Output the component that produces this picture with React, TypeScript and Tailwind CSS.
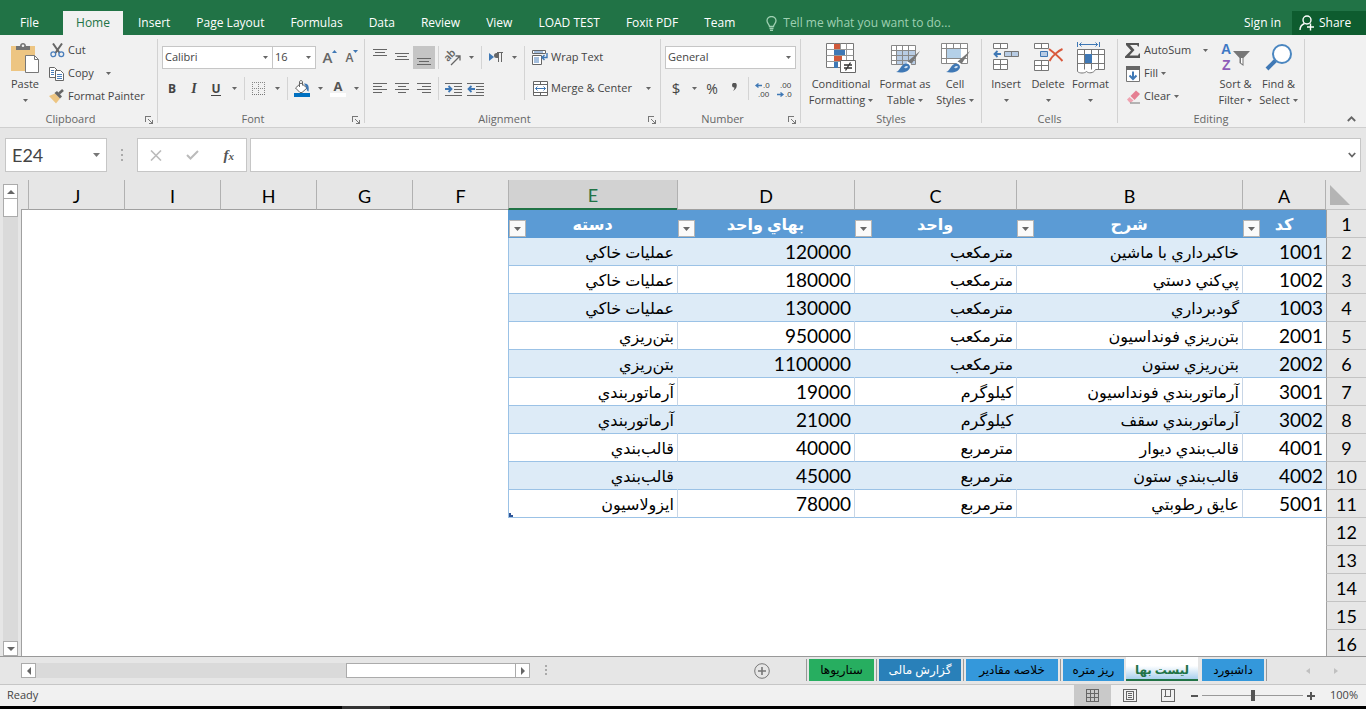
import { ReactNode, useState } from 'react'
import clsx from 'clsx'

type PriceRow = {
  code: number
  title: string
  unit: string
  price: number
  category: string
}

const ROWS: PriceRow[] = [
  { code: 1001, title: 'خاكبرداري با ماشين', unit: 'مترمكعب', price: 120000, category: 'عمليات خاكي' },
  { code: 1002, title: 'پي‌كني دستي', unit: 'مترمكعب', price: 180000, category: 'عمليات خاكي' },
  { code: 1003, title: 'گودبرداري', unit: 'مترمكعب', price: 130000, category: 'عمليات خاكي' },
  { code: 2001, title: 'بتن‌ريزي فونداسيون', unit: 'مترمكعب', price: 950000, category: 'بتن‌ريزي' },
  { code: 2002, title: 'بتن‌ريزي ستون', unit: 'مترمكعب', price: 1100000, category: 'بتن‌ريزي' },
  { code: 3001, title: 'آرماتوربندي فونداسيون', unit: 'كيلوگرم', price: 19000, category: 'آرماتوربندي' },
  { code: 3002, title: 'آرماتوربندي سقف', unit: 'كيلوگرم', price: 21000, category: 'آرماتوربندي' },
  { code: 4001, title: 'قالب‌بندي ديوار', unit: 'مترمربع', price: 40000, category: 'قالب‌بندي' },
  { code: 4002, title: 'قالب‌بندي ستون', unit: 'مترمربع', price: 45000, category: 'قالب‌بندي' },
  { code: 5001, title: 'عايق رطوبتي', unit: 'مترمربع', price: 78000, category: 'ايزولاسيون' },
]

const FIELDS = ['كد', 'شرح', 'واحد', 'بهاي واحد', 'دسته']
const COLUMNS = ['A', 'B', 'C', 'D', 'E', 'F', 'G', 'H', 'I', 'J']
const COLUMN_WIDTHS = ['w-[84px]', 'w-[226px]', 'w-[162px]', 'w-[177px]', 'w-[169px]', 'w-24', 'w-24', 'w-24', 'w-24', 'w-24']
const EMPTY_ROWS = [12, 13, 14, 15, 16]

const MENU = ['Insert', 'Page Layout', 'Formulas', 'Data', 'Review', 'View', 'LOAD TEST', 'Foxit PDF', 'Team']

const TAB_EDGE = 'shadow-[2px_0_0_#e6e6e6,3px_0_0_#999]'

const SHEETS = [
  { name: 'سناريوها', style: 'mr-[5px] bg-[#27ae60] text-black w-[65px]', edge: true },
  { name: 'گزارش مالی', style: 'mr-[5px] bg-[#2980b9] text-white w-[82px]', edge: true },
  { name: 'خلاصه مقادیر', style: 'mr-[5px] bg-[#3498db] text-black w-[92px]', edge: true },
  { name: 'ریز متره', style: 'mr-[2px] bg-[#3498db] text-black w-[61px]' },
  { name: 'لیست بها', style: 'mr-1 w-[72px]', active: true },
  { name: 'داشبورد', style: 'mr-1 bg-[#3498db] text-black w-[62px]', edge: true },
]

/* ---------- small parts ---------- */

function Caret({ className }: { className?: string }) {
  return (
    <svg viewBox="0 0 5 3" width="5" height="3" className={clsx('inline-block shrink-0 text-[#666]', className)}>
      <path d="M0 0h5L2.5 3z" fill="currentColor" />
    </svg>
  )
}

function CaretButton({ label }: { label: string }) {
  return (
    <button type="button" aria-label={label} className="flex h-[23px] w-[14px] items-center justify-center">
      <Caret />
    </button>
  )
}

function IconButton({ label, active, children }: { label: string; active?: boolean; children: ReactNode }) {
  return (
    <button
      type="button"
      aria-label={label}
      className={clsx('flex h-[23px] w-[22px] items-center justify-center', active && 'bg-[#c5c5c5]')}
    >
      {children}
    </button>
  )
}

function Divider() {
  return <div className="mx-[3px] h-[23px] w-px bg-[#d4d4d4]" />
}

function Group({ title, launcher, className, children }: { title: string; launcher?: boolean; className: string; children: ReactNode }) {
  return (
    <section className={clsx('flex shrink-0 pt-1', className)}>
      <div className="flex min-w-0 flex-1 flex-col">
        <div className="flex h-[73px] shrink-0">{children}</div>
        <div className={clsx('relative text-center text-[11px] leading-[14px] text-[#666]', launcher && 'pr-4')}>
          {title}
          {launcher && (
            <button type="button" aria-label={`${title} settings`} className="absolute right-1 top-1">
              <svg width="8" height="8" viewBox="0 0 8 8" fill="none" stroke="#777" shapeRendering="crispEdges">
                <path d="M.5 6V.5H6M3 3l4 4M7.5 4v3.5H4" />
              </svg>
            </button>
          )}
        </div>
      </div>
      <div className="mb-1 w-px bg-[#d2d2d2]" />
    </section>
  )
}

function BigButton({ icon, lines, className }: { icon: ReactNode; lines: [string, string?]; className: string }) {
  return (
    <button type="button" className={clsx('flex shrink-0 flex-col items-center pt-1 whitespace-nowrap', className)}>
      {icon}
      <span className="mt-[3px] leading-4">{lines[0]}</span>
      <span className="flex h-4 items-center gap-[3px]">
        {lines[1]}
        <Caret />
      </span>
    </button>
  )
}

function SmallButton({ icon, label, caret }: { icon: ReactNode; label: string; caret?: string }) {
  return (
    <button type="button" className="flex h-[23px] items-center whitespace-nowrap">
      <span className="mr-[3px] flex w-4 justify-center">{icon}</span>
      {label}
      {caret && <Caret className={caret} />}
    </button>
  )
}

function Dropdown({ label, value, className }: { label: string; value: string; className: string }) {
  return (
    <div className={clsx('relative h-[23px] border border-[#c6c6c6] bg-white', className)}>
      <select aria-label={label} defaultValue={value} className="h-full w-full appearance-none pl-[2px] text-[#444] outline-none">
        <option>{value}</option>
      </select>
      <Caret className="pointer-events-none absolute right-1 top-[9px]" />
    </div>
  )
}

/* ---------- icons ---------- */

function Lines({ rows }: { rows: [number, number, number][] }) {
  return (
    <svg width="15" height="17" viewBox="0 0 15 17" stroke="#666" shapeRendering="crispEdges">
      {rows.map(([x1, x2, y]) => (
        <path key={y} d={`M${x1} ${y + 0.5}H${x2}`} />
      ))}
    </svg>
  )
}

function PasteIcon() {
  return (
    <svg width="30" height="30" viewBox="0 0 30 30">
      <path d="M1 3h24v25H1z" fill="#edc582" />
      <path d="M6 7V3h4c0-4 6-4 6 0h4v4z" fill="#737373" />
      <circle cx="13" cy="2.8" r="1.3" fill="#f1f1f1" />
      <path d="M15.500 12.500h9l4 4v13h-13z" fill="#fff" stroke="#777" />
      <path d="M24.500 12.500v4h4" fill="none" stroke="#777" />
    </svg>
  )
}

function CutIcon() {
  return (
    <svg width="15" height="15" viewBox="0 0 15 15" fill="none">
      <path d="M3 .5 9.600 10M12 .5 5.400 10" stroke="#666" strokeWidth="2" />
      <circle cx="3.3" cy="11.3" r="2.4" stroke="#4a7ebb" strokeWidth="1.3" />
      <circle cx="11.3" cy="11.3" r="2.4" stroke="#4a7ebb" strokeWidth="1.3" />
    </svg>
  )
}

function CopyIcon() {
  return (
    <svg width="16" height="14" viewBox="0 0 16 14" fill="#fff" stroke="#666">
      <path d="M.5.5h5l3 3v7h-8z" />
      <path d="M2 3.500h3M2 5.500h3M2 7.500h3" stroke="#4a7ebb" />
      <path d="M6.500 3.500h5l3 3v7h-8z" />
      <path d="M8 7.500h5M8 9.500h5M8 11.500h5" stroke="#4a7ebb" />
    </svg>
  )
}

function PainterIcon() {
  return (
    <svg width="16" height="15" viewBox="0 0 16 15">
      <path d="M0 7 6 4.500l5 5L7 14.500z" fill="#edc582" />
      <path d="M5.500 4 8 2l5 5.500-2 2z" fill="#666" />
      <path d="m10 4.500 4-3.500" stroke="#666" strokeWidth="2.6" />
    </svg>
  )
}

function BordersIcon() {
  return (
    <svg width="14" height="14" viewBox="0 0 14 14" fill="none" stroke="#888" strokeDasharray="1 1" shapeRendering="crispEdges">
      <path d="M0 .5h13M0 6.500h13M.5 0v13M6.500 0v13M12.500 0v13" />
      <path d="M0 12.500h13" stroke="#777" />
    </svg>
  )
}

function FillColorIcon() {
  return (
    <svg width="18" height="17" viewBox="0 0 18 17">
      <path d="m8 3 6 5-5 4.500H7L2.500 8z" fill="#fff" stroke="#666" />
      <path d="M6.500 7V2c0-2 3-2 3 0v3.500" fill="none" stroke="#666" />
      <path d="M11 3.500c4-.5 5.500 2.500 4.500 8-1.500-.5-2-2-2-4z" fill="#3f78b5" />
      <path d="M1 13h16v4H1z" fill="#0070c0" />
    </svg>
  )
}

function FontColorIcon() {
  return (
    <span className="flex h-[17px] w-4 flex-col items-center">
      <span className="text-[13px] font-bold leading-[13px] text-[#555]">A</span>
      <span className="h-1 w-4 bg-white" />
    </span>
  )
}

function OrientationIcon() {
  return (
    <svg width="18" height="17" viewBox="0 0 18 17" className="overflow-visible">
      <text x="1" y="10" fontSize="11" fontWeight="700" fill="#666" transform="rotate(-45 6 8)" fontFamily="Lato">ab</text>
      <path d="m7 16 8.500-8.500M11.500 7h4.500v4.500" fill="none" stroke="#666" strokeWidth="1.3" />
    </svg>
  )
}

function DirectionIcon() {
  return (
    <svg width="14" height="11" viewBox="0 0 14 11">
      <path d="M0 1v8l5-4z" fill="#3f78b5" />
      <path d="M9 1H7.500a2.300 2.300 0 0 0 0 5H9z" fill="#666" />
      <path d="M9.500 10V.5h3V10M8 .5h6" fill="none" stroke="#666" />
    </svg>
  )
}

function IndentIcon({ back }: { back?: boolean }) {
  return (
    <svg width="17" height="14" viewBox="0 0 17 14">
      <path d="M0 1.500h17M9 4.500h8M9 7.500h8M9 10.500h8M0 13h17" stroke="#666" shapeRendering="crispEdges" />
      {back ? (
        <path d="M8 7H1.500M4.500 4 1.500 7l3 3" fill="none" stroke="#3f78b5" strokeWidth="1.8" />
      ) : (
        <path d="M0 7h6.500M3.500 4l3 3-3 3" fill="none" stroke="#3f78b5" strokeWidth="1.8" />
      )}
    </svg>
  )
}

function WrapIcon() {
  return (
    <svg width="16" height="15" viewBox="0 0 16 15" fill="none" stroke="#666">
      <path d="M.5.5h13v3H.5zM.5 5.500h9v9h-9z" fill="#fff" />
      <path d="M2 2h9M2 8h5M2 10h5M2 12h5" stroke="#4a7ebb" />
      <path d="M15 3v4.500h-5M12.500 5 10 7.500l2.500 2.500" stroke="#3f78b5" strokeWidth="1.4" />
    </svg>
  )
}

function MergeIcon() {
  return (
    <svg width="15" height="15" viewBox="0 0 15 15" fill="#fff" stroke="#666">
      <path d="M.5.5h14v14H.5zM.5 3.500h14M.5 11.500h14M7.500.5v3M7.500 11.500v3" />
      <path d="M2.500 7.500h10M4.500 5.500l-2 2 2 2M10.500 5.500l2 2-2 2" fill="none" stroke="#3f78b5" />
    </svg>
  )
}

function DecimalIcon({ less }: { less?: boolean }) {
  return (
    <svg width="16" height="18" viewBox="0 0 16 18" fill="#444" fontFamily="Liberation Sans" fontSize="8" className="overflow-visible">
      <text x={less ? 3 : 8} y="8">{less ? '.00' : '.0'}</text>
      <text x={less ? 8 : 3} y="17">{less ? '.0' : '.00'}</text>
      {less ? (
        <path d="M0 14.500h6M3.500 12.500l2.500 2-2.500 2" fill="none" stroke="#3f78b5" strokeWidth="1.3" />
      ) : (
        <path d="M7 5.500H1M3.500 3.500 1 5.500l2.500 2" fill="none" stroke="#3f78b5" strokeWidth="1.3" />
      )}
    </svg>
  )
}

function ConditionalIcon() {
  return (
    <svg width="30" height="30" viewBox="0 0 30 30">
      <path d="M.5.5h27v24H.5z" fill="#fff" stroke="#777" />
      <path d="M.5 6.500h27M.5 12.500h27M.5 18.500h27M8.500.5v24M14.500.5v24M20.500.5v24" stroke="#999" />
      <path d="M8 1h6v5H8zM8 13h8v5H8z" fill="#d0593a" />
      <path d="M8 7h11v5H8zM8 19h4v6H8z" fill="#3f78b5" />
      <path d="M14.500 17.500h15v12h-15z" fill="#fff" stroke="#666" />
      <path d="M18 22h8M18 25h8M24.500 19.500l-5 8" stroke="#333" strokeWidth="1.3" />
    </svg>
  )
}

function Brush() {
  return (
    <>
      <path d="M30 8 21.500 21l-4-2.500z" fill="#777" />
      <path d="M17.500 18.500l4 2.500-1.500 1.500-3.500-2z" fill="#fff" />
      <path d="M15.500 20.500c3 0 4.500 1.500 4.500 4-1 4-7 6-14 4.500 4-1 4.500-7 9.500-8.500z" fill="#3f78b5" />
      <path d="M14 24.500c1-1.500 3-2 4-1-.5 1.500-2 2-3 1.500z" fill="#cfe0f1" />
    </>
  )
}

function TableStyleIcon() {
  return (
    <svg width="30" height="30" viewBox="0 0 30 30">
      <path d="M1.500 2.500h24v19h-24z" fill="#fff" />
      <path d="M7 8h18v13H7z" fill="#b8cce4" />
      <path d="M1.500 2.500h24v19h-24zM1.500 7.500h24M1.500 12.500h24M1.500 17.500h24M6.500 2.500v19M12.500 2.500v19M18.500 2.500v19" fill="none" stroke="#888" />
      <Brush />
    </svg>
  )
}

function CellStyleIcon() {
  return (
    <svg width="30" height="30" viewBox="0 0 30 30">
      <path d="M1.500.5h26v20h-26z" fill="#fff" />
      <path d="M1.500.5h26v20h-26zM1.500 5.500h26M1.500 15.500h26M6.500.5v20M20.500.5v5M13.500.5v5M21.500 15.500v5" fill="none" stroke="#888" />
      <path d="M7 6h14v9H7z" fill="#b4d0e8" />
      <Brush />
    </svg>
  )
}

function InsertIcon() {
  return (
    <svg width="30" height="30" viewBox="0 0 30 30" fill="#fff" stroke="#777">
      <path d="M2.500.5h14v5h-14zM9.500.5v5M2.500 16.500h14v10h-14zM2.500 21.500h14M9.500 16.500v10" />
      <path d="M13.500 8.500h14v5h-14zM20.500 8.500v5" fill="#b8cce4" />
      <path d="M10 11H3.500M6.500 8 3.500 11l3 3" fill="none" stroke="#3f78b5" strokeWidth="1.8" />
    </svg>
  )
}

function DeleteIcon() {
  return (
    <svg width="30" height="30" viewBox="0 0 30 30" fill="#fff" stroke="#777">
      <path d="M1.500.5h14v5h-14zM8.500.5v5M1.500 17.500h14v10h-14zM1.500 22.500h14M8.500 17.500v10" />
      <path d="M7.500 8.500h7v5h-7z" fill="#b8cce4" stroke="#3f78b5" />
      <path d="M16 6c4 3 10 8 13.500 12M29.500 6C25 8 19 13 16.500 18" fill="none" stroke="#d9583b" strokeWidth="2" />
    </svg>
  )
}

function FormatIcon() {
  return (
    <svg width="30" height="32" viewBox="0 0 30 32" fill="#fff" stroke="#777" className="-my-px">
      <path d="M1.500 7.500h27v20h-9c-2 4-7 4-9 2-2 2-7 2-9 0zM1.500 12.500h27M1.500 21.500h27M8.500 7.500v20M15.500 7.500v20M22.500 7.500v20" />
      <path d="M9 12h7v9H9z" fill="#3f78b5" stroke="none" />
      <path d="M1.500 0v5M23.500 0v5M3 2.500h19M5.500.5l-2 2 2 2M19.500.5l2 2-2 2" fill="none" stroke="#3f78b5" />
    </svg>
  )
}

function SigmaIcon() {
  return (
    <svg width="16" height="15" viewBox="0 0 16 15">
      <path d="M1 0h13v3.500h-1L12 2H5l4.500 5L4.500 12.500H13l1-2h1V15H0v-1.500L6 7.500 1 2z" fill="#555" />
    </svg>
  )
}

function FillIcon() {
  return (
    <svg width="14" height="16" viewBox="0 0 14 16">
      <path d="M.5 1.500h13v14H.5z" fill="#fff" stroke="#777" />
      <path d="M0 0h14v4H0z" fill="#666" />
      <path d="M7 5.500v7M3.500 9.500l3.500 3.500 3.500-3.500" fill="none" stroke="#3f78b5" strokeWidth="2" />
    </svg>
  )
}

function ClearIcon() {
  return (
    <svg width="15" height="14" viewBox="0 0 15 14">
      <path d="m4.500 6 5.500-5.500 4 3.500-5.500 6z" fill="#e57f92" />
      <path d="m1 9.500 2.500-2.500 4 3.500L5 12.500H3.500z" fill="#f0a3b1" />
      <path d="M4 13h10" stroke="#777" />
    </svg>
  )
}

function SortIcon() {
  return (
    <svg width="30" height="30" viewBox="0 0 30 30" fontFamily="Liberation Sans" fontSize="14" fontWeight="700" className="overflow-visible">
      <text x="0" y="11" fill="#3f78c5">A</text>
      <text x="1" y="27" fill="#8e5cb8">Z</text>
      <path d="M12 8h17l-6.500 7v8l-4-3v-5z" fill="#777" />
      <path d="M20 15v5l1.500 1v-6z" fill="#fff" />
    </svg>
  )
}

function FindIcon() {
  return (
    <svg width="30" height="30" viewBox="0 0 30 30">
      <path d="M11.500 17.500 3 26" stroke="#3f78b5" strokeWidth="4" />
      <circle cx="18" cy="11" r="9" fill="#fff" stroke="#4a86c0" strokeWidth="2" />
    </svg>
  )
}

/* ---------- top of the window ---------- */

function MenuBar() {
  return (
    <header className="flex h-[35px] shrink-0 items-end bg-[#217346] text-[12px] text-white">
      <nav className="flex h-6 whitespace-nowrap">
        <button type="button" className="w-[63px] pr-1">File</button>
        <button type="button" className="mr-[2px] w-[60px] bg-[#f1f1f1] text-[#217346]">Home</button>
        {MENU.map((item) => (
          <button key={item} type="button" className="px-[13px]">{item}</button>
        ))}
      </nav>
      <label className="ml-[18px] flex h-6 flex-1 items-center gap-[6px] text-[#9fd0b2]">
        <svg width="11" height="15" viewBox="0 0 11 15" fill="none" stroke="currentColor" strokeWidth="1.3">
          <path d="M3.500 10.500C3.500 8.500 1 7.500 1 4.800a4.500 4.300 0 0 1 9 0c0 2.700-2.500 3.700-2.500 5.700zM3.500 12.500h4M4 14.300h3" />
        </svg>
        <input aria-label="Tell me" placeholder="Tell me what you want to do..." className="w-60 bg-transparent outline-none placeholder:text-[#9fd0b2]" />
      </label>
      <a href="#signin" className="mr-[11px] leading-6">Sign in</a>
      <button type="button" className="flex h-6 w-[74px] items-center gap-1 bg-[#0e5c2f] pl-[7px]">
        <svg width="16" height="16" viewBox="0 0 16 16" fill="none" stroke="#fff" strokeWidth="1.4">
          <circle cx="8" cy="5" r="4" />
          <path d="M1 15c0-3.500 2-5.500 4.500-6.500M8 12h7M11.500 8.500v7" />
        </svg>
        Share
      </button>
    </header>
  )
}

function Ribbon() {
  return (
    <div className="relative flex h-[93px] shrink-0 overflow-hidden border-b border-[#cfcfcf] bg-[#f1f1f1] text-[11px] text-[#444]">
      <Group title="Clipboard" launcher className="w-[158px]">
        <BigButton icon={<PasteIcon />} lines={['Paste']} className="ml-1 w-[42px]" />
        <div className="ml-[3px] flex flex-col">
          <SmallButton icon={<CutIcon />} label="Cut" />
          <SmallButton icon={<CopyIcon />} label="Copy" caret="ml-3" />
          <SmallButton icon={<PainterIcon />} label="Format Painter" />
        </div>
      </Group>

      <Group title="Font" launcher className="w-[207px]">
        <div className="ml-[3px] mt-[7px] flex flex-col gap-2">
          <div className="flex">
            <Dropdown label="Font" value="Calibri" className="ml-px w-[111px]" />
            <Dropdown label="Font size" value="16" className="-ml-px w-11" />
            <div className="ml-[3px] flex">
              <IconButton label="Increase font size">
                <span className="text-[15px] font-semibold text-[#666]">A</span>
                <svg width="5" height="3" viewBox="0 0 5 3" className="mb-3"><path d="M0 3h5L2.500 0z" fill="#3f78b5" /></svg>
              </IconButton>
              <IconButton label="Decrease font size">
                <span className="text-[12px] font-semibold text-[#666]">A</span>
                <svg width="5" height="3" viewBox="0 0 5 3" className="mb-3"><path d="M0 0h5L2.500 3z" fill="#3f78b5" /></svg>
              </IconButton>
            </div>
          </div>
          <div className="flex">
            <IconButton label="Bold"><b className="text-[12px]">B</b></IconButton>
            <IconButton label="Italic"><i className="font-['Liberation_Serif',serif] text-[14px] font-bold">I</i></IconButton>
            <IconButton label="Underline"><span className="border-b border-[#444] text-[12px] font-bold leading-[13px]">U</span></IconButton>
            <CaretButton label="Underline styles" />
            <Divider />
            <IconButton label="Borders"><BordersIcon /></IconButton>
            <CaretButton label="Border styles" />
            <Divider />
            <IconButton label="Fill colour"><FillColorIcon /></IconButton>
            <CaretButton label="Fill colours" />
            <IconButton label="Font colour"><FontColorIcon /></IconButton>
            <CaretButton label="Font colours" />
          </div>
        </div>
      </Group>

      <Group title="Alignment" launcher className="w-[296px]">
        <div className="ml-1 mt-[7px] flex flex-col gap-2">
          <div className="flex">
            <IconButton label="Top align"><Lines rows={[[0, 14, 0], [2, 12, 3], [0, 14, 6]]} /></IconButton>
            <IconButton label="Middle align"><Lines rows={[[0, 14, 4], [2, 12, 7], [0, 14, 10]]} /></IconButton>
            <IconButton label="Bottom align" active><Lines rows={[[0, 14, 9], [2, 12, 12], [0, 14, 15]]} /></IconButton>
            <Divider />
            <IconButton label="Orientation"><OrientationIcon /></IconButton>
            <CaretButton label="Orientation options" />
            <Divider />
            <IconButton label="Text direction"><DirectionIcon /></IconButton>
            <CaretButton label="Text direction options" />
          </div>
          <div className="flex">
            <IconButton label="Align left"><Lines rows={[[0, 14, 3], [0, 9, 6], [0, 14, 9], [0, 9, 12]]} /></IconButton>
            <IconButton label="Centre"><Lines rows={[[0, 14, 3], [3, 11, 6], [0, 14, 9], [3, 11, 12]]} /></IconButton>
            <IconButton label="Align right"><Lines rows={[[0, 14, 3], [5, 14, 6], [0, 14, 9], [5, 14, 12]]} /></IconButton>
            <Divider />
            <IconButton label="Increase indent"><IndentIcon /></IconButton>
            <IconButton label="Decrease indent"><IndentIcon back /></IconButton>
          </div>
        </div>
        <div className="mx-[3px] mt-[7px] h-[54px] w-px bg-[#d4d4d4]" />
        <div className="ml-1 mt-[7px] flex flex-col gap-2">
          <SmallButton icon={<WrapIcon />} label="Wrap Text" />
          <SmallButton icon={<MergeIcon />} label="Merge & Center" caret="ml-[14px]" />
        </div>
      </Group>

      <Group title="Number" launcher className="w-[140px]">
        <div className="ml-1 mt-[7px] flex flex-col gap-2">
          <Dropdown label="Number format" value="General" className="w-[131px]" />
          <div className="flex">
            <IconButton label="Currency"><span className="text-[15px]">$</span></IconButton>
            <CaretButton label="Currency options" />
            <IconButton label="Percent"><span className="text-[14px]">%</span></IconButton>
            <IconButton label="Thousands separator">
              <svg width="5" height="8" viewBox="0 0 5 8" className="mb-1"><path d="M0 2.200a2.200 2.200 0 0 1 4.800 0C4.800 5 3 7 1 8 2 6.500 2.400 5.500 2.400 4.400A2.200 2.200 0 0 1 0 2.200z" fill="#555" /></svg>
            </IconButton>
            <Divider />
            <IconButton label="Increase decimal"><DecimalIcon /></IconButton>
            <IconButton label="Decrease decimal"><DecimalIcon less /></IconButton>
          </div>
        </div>
      </Group>

      <Group title="Styles" className="w-[181px]">
        <BigButton icon={<ConditionalIcon />} lines={['Conditional', 'Formatting']} className="ml-1 w-[72px]" />
        <BigButton icon={<TableStyleIcon />} lines={['Format as', 'Table']} className="w-14" />
        <BigButton icon={<CellStyleIcon />} lines={['Cell', 'Styles']} className="w-11" />
      </Group>

      <Group title="Cells" className="w-[136px]">
        <BigButton icon={<InsertIcon />} lines={['Insert']} className="ml-[3px] w-[42px]" />
        <BigButton icon={<DeleteIcon />} lines={['Delete']} className="w-[42px]" />
        <BigButton icon={<FormatIcon />} lines={['Format']} className="w-[43px]" />
      </Group>

      <Group title="Editing" className="w-[187px]">
        <div className="ml-[7px] flex w-[89px] flex-col">
          <SmallButton icon={<SigmaIcon />} label="AutoSum" caret="ml-3" />
          <SmallButton icon={<FillIcon />} label="Fill" caret="ml-[3px]" />
          <SmallButton icon={<ClearIcon />} label="Clear" caret="ml-[3px]" />
        </div>
        <BigButton icon={<SortIcon />} lines={['Sort &', 'Filter']} className="w-[43px]" />
        <BigButton icon={<FindIcon />} lines={['Find &', 'Select']} className="w-[43px]" />
      </Group>

      <button type="button" aria-label="Collapse ribbon" className="ml-auto mr-[10px] self-end pb-[5px]">
        <svg width="9" height="6" viewBox="0 0 9 6" fill="none" stroke="#666" strokeWidth="1.8"><path d="m.8 5 3.700-3.700L8.200 5" /></svg>
      </button>
    </div>
  )
}

function FormulaBar() {
  return (
    <div className="flex h-[52px] shrink-0 bg-[#e6e6e6] pb-2 pl-[5px] pr-[5px] pt-[10px]">
      <div className="flex w-[102px] items-center border border-[#c6c6c6] bg-white">
        <input aria-label="Name box" defaultValue="E24" className="w-full min-w-0 bg-transparent pl-[6px] font-['Lato',sans-serif] text-[18px] text-[#444] outline-none" />
        <svg width="7" height="4" viewBox="0 0 7 4" className="mr-[6px] shrink-0"><path d="M0 0h7L3.500 4z" fill="#777" /></svg>
      </div>
      <svg width="2" height="12" viewBox="0 0 2 12" fill="#aaa" className="mx-[14px] self-center">
        <path d="M0 0h2v2H0zM0 5h2v2H0zM0 10h2v2H0z" />
      </svg>
      <div className="flex w-[110px] items-center justify-around border border-[#c6c6c6] bg-white">
        <button type="button" aria-label="Cancel">
          <svg width="12" height="11" viewBox="0 0 12 11" stroke="#bbb" strokeWidth="1.6"><path d="m1 .5 10 10M11 .5l-10 10" /></svg>
        </button>
        <button type="button" aria-label="Enter">
          <svg width="13" height="10" viewBox="0 0 13 10" fill="none" stroke="#bbb" strokeWidth="2"><path d="m1 5 3.500 3.500L12 1" /></svg>
        </button>
        <button type="button" aria-label="Insert function" className="font-['Liberation_Serif',serif] text-[15px] font-bold italic leading-4 text-[#555]">
          f<span className="text-[11px]">x</span>
        </button>
      </div>
      <div className="ml-[3px] flex flex-1 items-center border border-[#c6c6c6] bg-white">
        <input aria-label="Formula" className="h-full flex-1 px-2 outline-none" />
        <svg width="8" height="6" viewBox="0 0 8 6" fill="none" stroke="#666" strokeWidth="1.8" className="mr-1"><path d="m.8 1 3.200 3.500L7.200 1" /></svg>
      </div>
    </div>
  )
}

/* ---------- grid ---------- */

function ScrollArrow({ label, path }: { label: string; path: string }) {
  return (
    <button type="button" aria-label={label} className="flex h-[15px] w-[15px] shrink-0 items-center justify-center border border-[#ababab] bg-white">
      <svg width="8" height="8" viewBox="0 0 8 8" fill="#666"><path d={path} /></svg>
    </button>
  )
}

function RowHeader({ n }: { n: number }) {
  return (
    <th scope="row" className="border-b border-l border-b-[#c3c3c3] border-l-[#a0a0a0] bg-[#e6e6e6] p-0 text-[18px] font-normal">
      {n}
    </th>
  )
}

function Blanks() {
  return (
    <>
      <td colSpan={5} className="p-0" />
      <td className="border-l border-[#a0a0a0] p-0" />
    </>
  )
}

function Sheet() {
  return (
    <div className="flex min-h-0 flex-1 bg-[#e6e6e6]">
      <div className="flex w-[21px] shrink-0 flex-col pl-[3px] pt-1">
        <ScrollArrow label="Scroll up" path="M0 6h8L4 2z" />
        <div className="w-[15px] flex-1 bg-[#dadada]">
          <div className="h-[18px] border border-t-0 border-[#ababab] bg-white" />
        </div>
        <ScrollArrow label="Scroll down" path="M0 2h8L4 6z" />
      </div>
      <div className="min-w-0 flex-1 overflow-hidden">
        <table dir="rtl" className="w-full table-fixed border-separate border-spacing-0 bg-white font-['Lato','DejaVu_Sans',sans-serif] text-[19px] text-black">
          <colgroup>
            <col className="w-10" />
            {COLUMN_WIDTHS.map((width, i) => (
              <col key={i} className={width} />
            ))}
            <col />
          </colgroup>
          <thead>
            <tr className="h-[30px] bg-[#e6e6e6] text-[18px] leading-[26px]">
              <td className="border-b border-[#c3c3c3] p-0">
                <svg width="20" height="20" viewBox="0 0 20 20" className="mr-auto ml-1"><path d="M0 0v20h20z" fill="#b4b4b4" /></svg>
              </td>
              {COLUMNS.map((name) => (
                <th
                  key={name}
                  scope="col"
                  className={clsx(
                    'border-l border-l-[#b1b1b1] p-0 pt-[2px] font-normal',
                    name === 'E' ? 'border-b-2 border-b-[#217346] bg-[#d2d2d2] text-[#217346]' : 'border-b border-b-[#a0a0a0]',
                    name === 'A' && 'border-r border-r-[#b1b1b1]',
                  )}
                >
                  {name}
                </th>
              ))}
              <td className="border-b border-[#a0a0a0] p-0" />
            </tr>
          </thead>
          <tbody className="leading-[26px]">
            <tr className="h-7">
              <RowHeader n={1} />
              {FIELDS.map((field) => (
                <th key={field} scope="col" className="relative border-b border-[#5b9bd5] bg-[#5b9bd5] p-0 text-[16px] font-bold text-white">
                  {field}
                  <button
                    type="button"
                    aria-label={`Filter ${field}`}
                    className="absolute bottom-0 left-px flex h-[17px] w-[17px] items-center justify-center border border-[#b5b5b5] bg-[#fafafa]"
                  >
                    <svg width="7" height="4" viewBox="0 0 7 4"><path d="M0 0h7L3.500 4z" fill="#666" /></svg>
                  </button>
                </th>
              ))}
              <Blanks />
            </tr>
            {ROWS.map((row, i) => (
              <tr key={row.code} className="h-7">
                <RowHeader n={i + 2} />
                {[row.code, row.title, row.unit, row.price, row.category].map((value, col) => (
                  <td
                    key={col}
                    className={clsx(
                      'relative whitespace-nowrap border-b border-l border-b-[#9bc2e6] p-0 pr-[3px] text-right',
                      i % 2 === 0 ? 'bg-[#ddebf7]' : 'bg-white',
                      col === 4 ? 'border-l-[#9bc2e6]' : i % 2 === 0 ? 'border-l-transparent' : 'border-l-[#c8d6e6]',
                      typeof value === 'string' && 'text-[16px]',
                    )}
                  >
                    {value}
                    {/* table resize handle */}
                    {col === 4 && i === ROWS.length - 1 && (
                      <svg width="4" height="4" viewBox="0 0 4 4" className="absolute bottom-0 left-0"><path d="M0 0h2v2h2v2H0z" fill="#2f5597" /></svg>
                    )}
                  </td>
                ))}
                <Blanks />
              </tr>
            ))}
            {EMPTY_ROWS.map((n) => (
              <tr key={n} className="h-7">
                <RowHeader n={n} />
                <td colSpan={5} className="p-0" />
                <Blanks />
              </tr>
            ))}
          </tbody>
        </table>
      </div>
    </div>
  )
}

/* ---------- bottom of the window ---------- */

function SheetTabs() {
  return (
    <div className="flex h-[29px] shrink-0 border-y border-b-[#c6c6c6] border-t-[#999] bg-[#e6e6e6]">
      <div className="mt-[6px] flex h-[15px] w-[530px] pl-[21px]">
        <ScrollArrow label="Scroll left" path="M6 0v8L2 4z" />
        <div className="flex flex-1 justify-end bg-[#dadada]">
          <div className="w-[169px] border border-r-0 border-[#ababab] bg-white" />
        </div>
        <ScrollArrow label="Scroll right" path="M2 0v8l4-4z" />
      </div>
      <svg width="2" height="10" viewBox="0 0 2 10" fill="#aaa" className="ml-[15px] mt-2">
        <path d="M0 0h2v2H0zM0 4h2v2H0zM0 8h2v2H0z" />
      </svg>
      <button type="button" aria-label="New sheet" className="ml-auto mr-9 flex items-center">
        <svg width="16" height="16" viewBox="0 0 16 16" fill="none" stroke="#777">
          <circle cx="8" cy="8" r="7.3" />
          <path d="M4 8h8M8 4v8" strokeWidth="1.6" />
        </svg>
      </button>
      <nav className="flex pl-[3px] font-['Lato','DejaVu_Sans',sans-serif] text-[12px]">
        {SHEETS.map((sheet, i) => (
          <button
            key={sheet.name}
            type="button"
            dir="rtl"
            className={clsx(
              'whitespace-nowrap',
              sheet.style,
              sheet.edge && i > 0 && TAB_EDGE,
              i === 0 && 'shadow-[2px_0_0_#e6e6e6,3px_0_0_#999,-2px_0_0_#e6e6e6,-3px_0_0_#999]',
              sheet.active
                ? 'h-6 border-b-2 border-[#217346] bg-linear-to-b from-white from-40% to-[#a9d0ee] pt-1 font-bold text-[#217346]'
                : 'mt-[2px] h-[22px]',
            )}
          >
            {sheet.name}
          </button>
        ))}
      </nav>
      <div className="ml-[38px] mr-7 flex items-center gap-6 text-[#c0c0c0]">
        <svg width="4" height="6" viewBox="0 0 4 6"><path d="M4 0v6L0 3z" fill="currentColor" /></svg>
        <svg width="4" height="6" viewBox="0 0 4 6"><path d="M0 0v6l4-3z" fill="currentColor" /></svg>
      </div>
    </div>
  )
}

function StatusBar() {
  const [zoom, setZoom] = useState(100)

  return (
    <footer className="shrink-0">
      <div className="flex h-[21px] items-center bg-[#f1f1f1] pl-[7px] text-[11px] text-[#444]">
        <span>Ready</span>
        <div className="ml-auto flex h-full">
          <button type="button" aria-label="Normal view" className="flex w-[37px] items-center justify-center bg-[#c9c9c9]">
            <svg width="13" height="13" viewBox="0 0 13 13" fill="none" stroke="#666" shapeRendering="crispEdges">
              <path d="M.5.5h12v12H.5zM.5 4.500h12M.5 8.500h12M4.500.5v12M8.500.5v12" />
            </svg>
          </button>
          <button type="button" aria-label="Page layout view" className="flex w-[38px] items-center justify-center">
            <svg width="14" height="13" viewBox="0 0 14 13" fill="none" stroke="#666" shapeRendering="crispEdges">
              <path d="M.5.5h13v12H.5zM3.500 2.500h7v8h-7zM5 4.500h4M5 6.500h4M5 8.500h4" />
            </svg>
          </button>
          <button type="button" aria-label="Page break view" className="flex w-[38px] items-center justify-center">
            <svg width="14" height="13" viewBox="0 0 14 13" fill="none" stroke="#666" shapeRendering="crispEdges">
              <path d="M.5.5h13v12H.5zM4.500.5v7M9.500.5v7M3 7.500h7" />
            </svg>
          </button>
        </div>
        <button type="button" aria-label="Zoom out" className="ml-1 h-[2px] w-[7px] bg-[#555]" />
        <input
          type="range"
          aria-label="Zoom"
          min={0}
          max={200}
          value={zoom}
          onChange={(e) => setZoom(Number(e.target.value))}
          className="mx-1 h-px w-[101px] appearance-none bg-[#999] [&::-webkit-slider-thumb]:h-[11px] [&::-webkit-slider-thumb]:w-1 [&::-webkit-slider-thumb]:appearance-none [&::-webkit-slider-thumb]:bg-[#555]"
        />
        <button type="button" aria-label="Zoom in">
          <svg width="8" height="8" viewBox="0 0 8 8" stroke="#555" strokeWidth="2"><path d="M0 4h8M4 0v8" /></svg>
        </button>
        <span className="ml-[15px] w-9">{zoom}%</span>
      </div>
      <div className="h-[3px] bg-black pl-[342px]">
        <div className="h-full w-12 bg-[#333]" />
      </div>
    </footer>
  )
}

export default function App() {
  return (
    <div className="flex h-screen flex-col overflow-hidden font-['Open_Sans',sans-serif]">
      <MenuBar />
      <Ribbon />
      <FormulaBar />
      <Sheet />
      <SheetTabs />
      <StatusBar />
    </div>
  )
}
